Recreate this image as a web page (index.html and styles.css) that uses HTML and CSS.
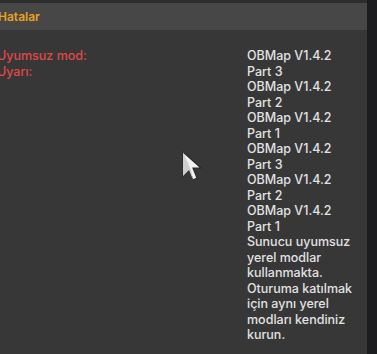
FILE: index.html
```html
<!DOCTYPE html>
<html lang="tr">

<head>
    <meta charset="UTF-8">
    <title>Hatalar</title>
    <link rel="stylesheet" href="styles.css">
</head>

<body>
    <div class="screen">
        <!-- Error panel -->
        <div class="panel">
            <div class="panel-top"></div>
            <div class="panel-header">
                <span class="panel-title">Hatalar</span>
            </div>
            <div class="panel-body">
                <div class="labels">
                    <div class="label">Uyumsuz mod:</div>
                    <div class="label">Uyarı:</div>
                </div>
                <div class="values">
                    <div>OBMap V1.4.2 Part 3</div>
                    <div>OBMap V1.4.2 Part 2</div>
                    <div>OBMap V1.4.2 Part 1</div>
                    <div>OBMap V1.4.2 Part 3</div>
                    <div>OBMap V1.4.2 Part 2</div>
                    <div>OBMap V1.4.2 Part 1</div>
                    <div>Sunucu uyumsuz yerel modlar kullanmakta. Oturuma katılmak için aynı yerel modları kendiniz kurun.</div>
                </div>
            </div>
        </div>
        <div class="side"></div>

        <!-- mouse pointer -->
        <svg class="cursor" width="24" height="34" viewBox="0 0 24 34">
            <path d="M2 2 L2 26 L8 20 L12 30 L16 28 L12 18 L20 18 Z" fill="#f2f2f2" stroke="#2a2a2a" stroke-width="1.2"/>
            <path d="M2 2 L2 26 L8 20 L12 30 L10 20 Z" fill="#cfcfcf"/>
        </svg>
    </div>
</body>

</html>
```

FILE: styles.css
```css
body {
    margin: 0;
    padding: 0;
    background-color: #1c1d1f;
    font-family: 'Inter', 'Noto Sans', sans-serif;
}

.screen {
    position: relative;
    display: flex;
    width: 377px;
    height: 354px;
    overflow: hidden;
}

.panel {
    width: 367px;
    display: flex;
    flex-direction: column;
    background-color: #373737;
}

.side {
    flex: 1;
    background-color: #1c1d1f;
}

.panel-top {
    height: 3px;
    background-color: #2e2e2e;
}

.panel-header {
    height: 27px;
    display: flex;
    align-items: center;
    background-color: #474747;
}

.panel-title {
    margin-left: -2px;
    color: #e8a21d;
    font-size: 12px;
    font-weight: 600;
}

.panel-body {
    display: grid;
    grid-template-columns: 250px 108px;
    padding-top: 18px;
    margin-left: -3px;
    font-size: 12.5px;
    font-weight: 500;
    line-height: 15.5px;
}

.label {
    color: #e04848;
}

.values {
    color: #e2e2e2;
}

.cursor {
    position: absolute;
    left: 181px;
    top: 150px;
}
```
